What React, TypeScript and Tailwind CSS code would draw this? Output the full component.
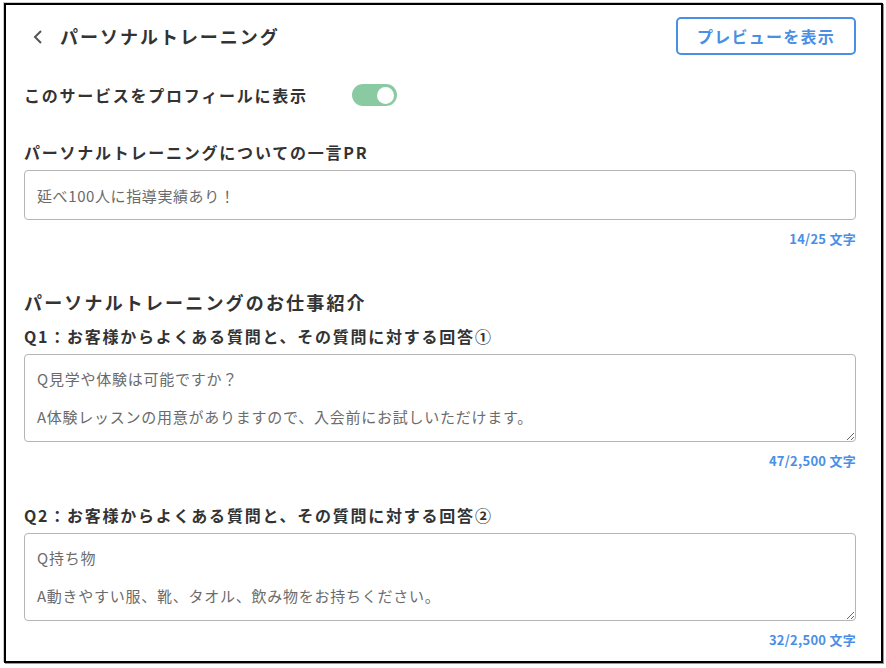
import React from 'react';

const FONT = { fontFamily: '"Noto Sans CJK JP", "Noto Sans", sans-serif' };

function Counter({ text }: { text: string }) {
  return (
    <div className="mt-[10px] text-right text-[13px] leading-[18px] font-bold tracking-[0.02em] text-[#4a8fe6]">{text}</div>
  );
}

function QA({ label, q, a, count }: { label: string; q: string; a: string; count: string }) {
  return (
    <div>
      <div className="text-[16px] leading-[24px] font-bold tracking-[0.11em] text-[#333]">{label}</div>
      <textarea
        readOnly
        defaultValue={`${q}\n\n${a}`}
        className="mt-[6px] block w-full h-[88px] border border-[#b5b5b5] rounded-[4px] px-[12px] pt-[14px] text-[15px] leading-[19px] tracking-[0.05em] text-[#6b6b6b] outline-none"
        style={FONT}
      />
      <Counter text={count} />
    </div>
  );
}

export default function App() {
  return (
    <div className="bg-white min-h-screen pt-[3px] pl-[4px]" style={FONT}>
      <div className="w-[879px] h-[660px] border-2 border-black shadow-[1px_1px_0_#999,-1px_-1px_0_#ccc] bg-white pt-[12px] pl-[18px] pr-[25px] overflow-hidden">
        {/* HEADER */}
        <div className="flex items-center justify-between h-[38px]">
          <div className="flex items-center">
            <svg width="16" height="16" viewBox="0 0 16 16" className="ml-[6px] mt-[1px]">
              <polyline points="11,2 5,8 11,14" fill="none" stroke="#555" strokeWidth="2" />
            </svg>
            <h1 className="ml-[14px] text-[18px] leading-[27px] font-bold tracking-[0.11em] text-[#333]">パーソナルトレーニング</h1>
          </div>
          <button className="w-[180px] h-[38px] border-2 border-[#4a8fe6] rounded-[5px] text-[16px] font-bold tracking-[0.08em] text-[#4a8fe6] bg-white" style={FONT}>
            プレビューを表示
          </button>
        </div>

        {/* TOGGLE */}
        <div className="flex items-center mt-[28px] h-[24px]">
          <span className="text-[16px] leading-[24px] font-bold tracking-[0.11em] text-[#333]">このサービスをプロフィールに表示</span>
          <div className="ml-[44px] w-[45px] h-[22px] rounded-full bg-[#8acaa2] flex items-center justify-end pr-[3px]">
            <div className="w-[17px] h-[17px] rounded-full bg-white" />
          </div>
        </div>

        {/* PR */}
        <div className="mt-[33px] text-[16px] leading-[24px] font-bold tracking-[0.11em] text-[#333]">パーソナルトレーニングについての一言PR</div>
        <input
          readOnly
          defaultValue="延べ100人に指導実績あり！"
          className="mt-[6px] block w-full h-[50px] border border-[#b5b5b5] rounded-[4px] px-[12px] text-[15px] tracking-[0.04em] text-[#6b6b6b] outline-none"
          style={FONT}
        />
        <Counter text="14/25 文字" />

        {/* WORK */}
        <h2 className="mt-[41px] text-[18px] leading-[27px] font-bold tracking-[0.12em] text-[#333]">パーソナルトレーニングのお仕事紹介</h2>
        <div className="mt-[8px]">
          <QA
            label="Q1：お客様からよくある質問と、その質問に対する回答①"
            q="Q見学や体験は可能ですか？"
            a="A体験レッスンの用意がありますので、入会前にお試しいただけます。"
            count="47/2,500 文字"
          />
        </div>
        <div className="mt-[33px]">
          <QA
            label="Q2：お客様からよくある質問と、その質問に対する回答②"
            q="Q持ち物"
            a="A動きやすい服、靴、タオル、飲み物をお持ちください。"
            count="32/2,500 文字"
          />
        </div>
      </div>
    </div>
  );
}
